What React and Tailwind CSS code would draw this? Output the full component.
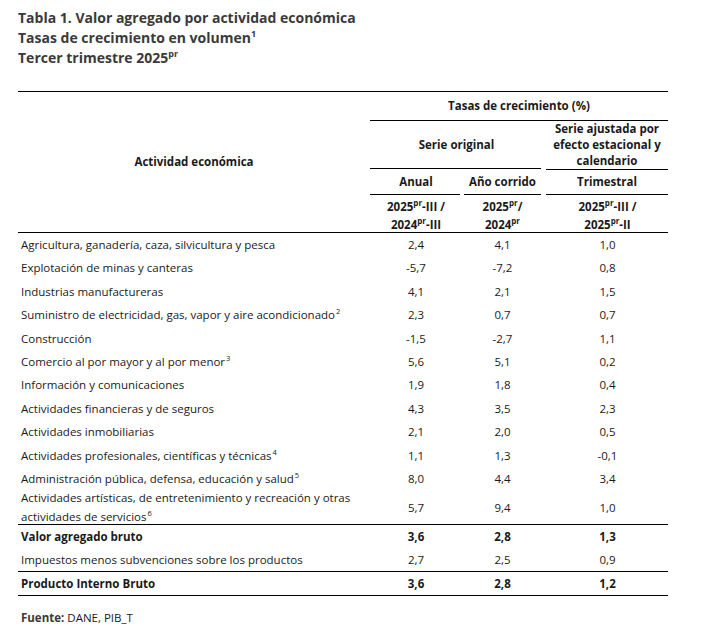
import React from 'react';

const rows = [
  { label: 'Agricultura, ganadería, caza, silvicultura y pesca', v: ['2,4', '4,1', '1,0'] },
  { label: 'Explotación de minas y canteras', v: ['-5,7', '-7,2', '0,8'] },
  { label: 'Industrias manufactureras', v: ['4,1', '2,1', '1,5'] },
  { label: 'Suministro de electricidad, gas, vapor y aire acondicionado', note: '2', v: ['2,3', '0,7', '0,7'] },
  { label: 'Construcción', v: ['-1,5', '-2,7', '1,1'] },
  { label: 'Comercio al por mayor y al por menor', note: '3', v: ['5,6', '5,1', '0,2'] },
  { label: 'Información y comunicaciones', v: ['1,9', '1,8', '0,4'] },
  { label: 'Actividades financieras y de seguros', v: ['4,3', '3,5', '2,3'] },
  { label: 'Actividades inmobiliarias', v: ['2,1', '2,0', '0,5'] },
  { label: 'Actividades profesionales, científicas y técnicas', note: '4', v: ['1,1', '1,3', '-0,1'] },
  { label: 'Administración pública, defensa, educación y salud', note: '5', v: ['8,0', '4,4', '3,4'] },
];

const Sup = ({ children }) => (
  <sup className="text-[7.5px] leading-none relative -top-[5px] ml-[1px]">{children}</sup>
);

const Pr = () => <sup className="text-[8px] leading-none -top-[5px] relative">pr</sup>;

const ValueCells = ({ v, bold }) => (
  <>
    <div className={`flex items-center justify-center ${bold ? 'font-bold' : ''}`}>{v[0]}</div>
    <div className={`flex items-center justify-center ${bold ? 'font-bold' : ''}`}>{v[1]}</div>
    <div className={`flex items-center justify-center pl-[4px] ${bold ? 'font-bold' : ''}`}>{v[2]}</div>
  </>
);

export default function App() {
  return (
    <div className="w-[710px] h-[630px] bg-white pl-[18px] pt-[8px] font-['Open_Sans',sans-serif] text-[#1a1a1a]">
      <div className="text-[14px] leading-[20px] font-bold text-[#3a3a3a]">
        <div>Tabla 1. Valor agregado por actividad económica</div>
        <div>
          Tasas de crecimiento en volumen<sup className="text-[9px] leading-none -top-[6px] relative">1</sup>
        </div>
        <div>
          Tercer trimestre 2025<sup className="text-[9px] leading-none -top-[6px] relative">pr</sup>
        </div>
      </div>

      <div className="mt-[23px] w-[650px] border-t border-black text-[11.5px]">
        {/* header */}
        <div className="grid grid-cols-[352px_92px_81px_125px] grid-rows-[29px_48px_26px_37px] font-bold">
          <div className="row-span-4 flex items-center justify-center">Actividad económica</div>
          <div className="col-span-3 flex flex-col">
            <div className="flex-1 flex items-center justify-center">Tasas de crecimiento (%)</div>
            <div className="border-b border-black" />
          </div>
          <div className="col-span-2 flex flex-col">
            <div className="flex-1 flex items-center justify-center">Serie original</div>
            <div className="border-b border-black mr-[2px]" />
          </div>
          <div className="flex flex-col">
            <div className="flex-1 flex items-center justify-center text-center leading-[16px] pl-[3px]">
              Serie ajustada por
              <br />
              efecto estacional y
              <br />
              calendario
            </div>
            <div className="border-b border-black ml-[3px]" />
          </div>
          <div className="flex flex-col">
            <div className="flex-1 flex items-center justify-center">Anual</div>
            <div className="border-b border-black mr-[2px]" />
          </div>
          <div className="flex flex-col">
            <div className="flex-1 flex items-center justify-center">Año corrido</div>
            <div className="border-b border-black ml-[2px] mr-[2px]" />
          </div>
          <div className="flex flex-col">
            <div className="flex-1 flex items-center justify-center pl-[3px]">Trimestral</div>
            <div className="border-b border-black ml-[3px]" />
          </div>
          <div className="flex flex-col items-center justify-center leading-[18px] pt-[4px]">
            <div>
              2025<Pr />-III /
            </div>
            <div>
              2024<Pr />-III
            </div>
          </div>
          <div className="flex flex-col items-center justify-center leading-[18px] pt-[4px]">
            <div>
              2025<Pr />/
            </div>
            <div>
              2024<Pr />
            </div>
          </div>
          <div className="flex flex-col items-center justify-center leading-[18px] pl-[4px] pt-[4px]">
            <div>
              2025<Pr />-III /
            </div>
            <div>
              2025<Pr />-II
            </div>
          </div>
        </div>

        {/* body */}
        <div className="border-t border-black grid grid-cols-[352px_92px_81px_125px]">
          {rows.map((r) => (
            <React.Fragment key={r.label}>
              <div className="h-[23.4px] flex items-center pl-[3px]">
                <span>
                  {r.label}
                  {r.note && <Sup>{r.note}</Sup>}
                </span>
              </div>
              <ValueCells v={r.v} />
            </React.Fragment>
          ))}
          <div className="h-[34px] pl-[3px] leading-[19px] flex items-center">
            <span>
              Actividades artísticas, de entretenimiento y recreación y otras actividades de servicios
              <Sup>6</Sup>
            </span>
          </div>
          <ValueCells v={['5,7', '9,4', '1,0']} />
        </div>
        <div className="border-t border-black grid grid-cols-[352px_92px_81px_125px]">
          <div className="h-[23px] flex items-center pl-[3px] font-bold">Valor agregado bruto</div>
          <ValueCells v={['3,6', '2,8', '1,3']} bold />
          <div className="h-[23px] flex items-center pl-[3px]">Impuestos menos subvenciones sobre los productos</div>
          <ValueCells v={['2,7', '2,5', '0,9']} />
        </div>
        <div className="border-t border-b border-black grid grid-cols-[352px_92px_81px_125px]">
          <div className="h-[23px] flex items-center pl-[3px] font-bold">Producto Interno Bruto</div>
          <ValueCells v={['3,6', '2,8', '1,2']} bold />
        </div>
      </div>

      <div className="mt-[13px] pl-[3px] text-[11.5px]">
        <span className="font-bold text-[#3a3a3a]">Fuente:</span> DANE, PIB_T
      </div>
    </div>
  );
}
